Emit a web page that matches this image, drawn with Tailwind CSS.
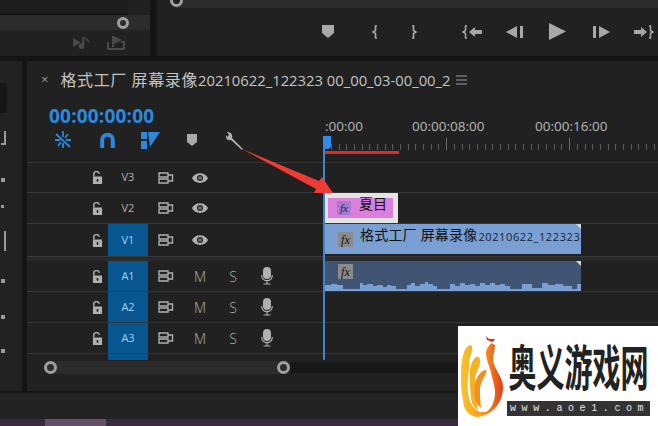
<!DOCTYPE html>
<html lang="en">
  <head>
    <meta charset="UTF-8" />
    <title>Premiere timeline</title>
    <script src="https://cdn.jsdelivr.net/npm/@tailwindcss/browser@4"></script>
  </head>
  <body class="w-[658px] h-[426px] overflow-hidden bg-[#141414] font-['Open_Sans','Noto_Sans_CJK_SC',sans-serif] text-[#b4b4b4]">
    <svg class="hidden">
      <symbol id="lock" viewBox="0 0 12 14"><path d="M2 6V4a3 3 0 0 1 6-1" fill="none" stroke="currentColor" stroke-width="1.6"/><path fill-rule="evenodd" d="M1 6h10v8H1zM6 8.500a1.200 1.200 0 0 0-.6 2.200V12h1.200v-1.300A1.200 1.200 0 0 0 6 8.500z" fill="currentColor"/></symbol>
      <symbol id="sync" viewBox="0 0 16 12"><path d="M1 1h9v4H1zM1 7h9v4H1zM10 3h4.500v6H10" fill="none" stroke="currentColor" stroke-width="1.400"/></symbol>
      <symbol id="eye" viewBox="0 0 16 10"><path fill-rule="evenodd" d="M0 5c3-6.500 13-6.500 16 0-3 6.500-13 6.500-16 0zM8 2a3 3 0 1 0 0 6 3 3 0 0 0 0-6z" fill="currentColor"/><circle cx="8" cy="5" r="1.800" fill="currentColor" opacity=".6"/></symbol>
      <symbol id="mic" viewBox="0 0 12 18"><rect x="2" y="0" width="8" height="12" rx="4" fill="currentColor"/><path d="M.7 8c0 7.500 10.600 7.500 10.600 0M6 13.500v3M2.500 17h7" fill="none" stroke="currentColor" stroke-width="1.200"/></symbol>
      <symbol id="fx" viewBox="0 0 16 16"><rect width="16" height="16" fill="#8a8a8a"/><text x="8" y="12.500" text-anchor="middle" font-size="13" font-style="italic" font-family="Liberation Serif" fill="#111">fx</text></symbol>
      <symbol id="fxp" viewBox="0 0 16 16"><rect width="16" height="16" fill="#a77bd0"/><text x="8" y="12.500" text-anchor="middle" font-size="13" font-style="italic" font-family="Liberation Serif" fill="#2a1a50">fx</text></symbol>
    </svg>

    <!-- top panels -->
    <div class="flex h-[56px] gap-[7px]">
      <div class="w-[150px] bg-[#212121] flex flex-col">
        <div class="h-[15px] bg-[#1c1c1c] border-b border-[#0c0c0c] mr-[22px]"></div>
        <div class="h-[15px] bg-[#2c2c2c] flex justify-end items-center pr-[21px] pt-[1px]">
          <span class="w-[12px] h-[12px] rounded-full border-[3px] border-[#a0a0a0]"></span>
        </div>
        <div class="flex justify-end gap-[16px] pr-[25px] pt-[6px] text-[#4a4a4a]">
          <svg class="w-[18px] h-[13px]" viewBox="0 0 18 13"><path d="M0 2l8 4.500L0 11z" fill="currentColor"/><path d="M11 1v9a2.500 2.500 0 1 1-1.500-2V1h1.500zM11 1c2 2 5 2 5 6" fill="currentColor" stroke="currentColor" stroke-width=".6"/></svg>
          <svg class="w-[18px] h-[14px]" viewBox="0 0 18 14"><path d="M1 6v7h16V6h-3" fill="none" stroke="currentColor" stroke-width="2"/><path d="M7 0l8 4-8 4v3H5V0z" fill="currentColor"/></svg>
        </div>
      </div>
      <div class="flex-1 bg-[#212121] flex flex-col">
        <div class="h-[8px] bg-[#2c2c2c] ml-[19px] relative">
          <span class="absolute left-[-6px] top-[-6px] w-[13px] h-[13px] rounded-full border-[3px] border-[#a0a0a0] bg-[#212121]"></span>
        </div>
        <div class="flex items-center text-[#a8a8a8] h-[48px] pb-[1px]">
          <svg class="ml-[165px] w-[12px] h-[13px]" viewBox="0 0 12 13"><path d="M0 0h12v8l-6 5-6-5z" fill="currentColor"/></svg>
          <svg class="ml-[38px] w-[7px] h-[14px]" viewBox="0 0 7 14"><path d="M5 1H3.500v4.500L1 7l2.500 1.500V13H5" fill="none" stroke="currentColor" stroke-width="1.600"/></svg>
          <svg class="ml-[31px] w-[7px] h-[14px]" viewBox="0 0 7 14"><path d="M2 1h1.500v4.500L6 7 3.500 8.500V13H2" fill="none" stroke="currentColor" stroke-width="1.600"/></svg>
          <svg class="ml-[45px] w-[20px] h-[14px]" viewBox="0 0 20 14"><path d="M5 1H3.500v4.500L1 7l2.500 1.500V13H5" fill="none" stroke="currentColor" stroke-width="1.500"/><path d="M7 7l6-5v3h7v4h-7v3z" fill="currentColor"/></svg>
          <svg class="ml-[24px] w-[18px] h-[12px]" viewBox="0 0 18 12"><path d="M0 6l11-6v12z" fill="currentColor"/><rect x="14" y="0" width="3" height="12" fill="currentColor"/></svg>
          <svg class="ml-[25px] w-[17px] h-[17px]" viewBox="0 0 17 17"><path d="M0 0l17 8.500L0 17z" fill="currentColor"/></svg>
          <svg class="ml-[27px] w-[17px] h-[12px]" viewBox="0 0 17 12"><rect x="0" y="0" width="3" height="12" fill="currentColor"/><path d="M6 0l11 6-11 6z" fill="currentColor"/></svg>
          <svg class="ml-[24px] w-[20px] h-[14px]" viewBox="0 0 20 14"><path d="M0 5h7V2l6 5-6 5V9H0z" fill="currentColor"/><path d="M15 1h1.500v4.500L19 7l-2.500 1.500V13H15" fill="none" stroke="currentColor" stroke-width="1.500"/></svg>
        </div>
      </div>
    </div>

    <div class="flex h-[330px] mt-[5px] gap-[5px]">
      <!-- tools strip -->
      <div class="w-[22px] bg-[#222222] flex flex-col items-start pl-[1px]">
        <div class="h-[30px] w-[7px] -ml-[1px] mt-[22px] bg-[#161616] rounded-r-sm"></div>
        <span class="mt-[18px] w-[5px] h-[14px] border-r-2 border-b-2 border-[#9a9a9a]"></span>
        <span class="mt-[33px] w-[4px] h-[4px] bg-[#9a9a9a]"></span>
        <span class="mt-[23px] w-[3px] h-[3px] bg-[#9a9a9a]"></span>
        <span class="mt-[23px] w-[5px] h-[20px] border-r-2 border-[#9a9a9a]"></span>
        <span class="mt-[28px] w-[4px] h-[4px] bg-[#9a9a9a]"></span>
        <span class="mt-[32px] w-[4px] h-[4px] bg-[#9a9a9a]"></span>
        <span class="mt-[30px] w-[4px] h-[4px] bg-[#9a9a9a]"></span>
      </div>

      <!-- timeline panel -->
      <div class="flex-1 bg-[#212121] flex flex-col relative">
        <div class="h-[36px] flex items-center pl-[14px] pt-[2px] text-[#c4c4c4] whitespace-nowrap">
          <span class="text-[13px] text-[#999] mr-[12px]">×</span>
          <span class="text-[16px] tracking-[0.6px]">格式工厂 屏幕录像</span>
          <span class="text-[14.800px]">20210622_122323 00_00_03-00_00_2</span>
          <svg class="ml-[5px] w-[11px] h-[10px]" viewBox="0 0 11 10"><path d="M0 1h11M0 5h11M0 9h11" stroke="#a0a0a0" stroke-width="1"/></svg>
        </div>

        <div class="flex h-[65px]">
          <div class="w-[296px] pl-[22px]">
            <div class="text-[19px] leading-[22px] font-bold tracking-[0.2px] text-[#2d88e0] mt-[8px]">00:00:00:00</div>
            <div class="flex items-center h-[24px] mt-[1px] text-[#2d88e0]">
              <svg class="ml-[5px] w-[18px] h-[18px]" viewBox="0 0 18 18"><path d="M9 0v6M2 3l14 13M1 9h5M12 9h5M4 15l3-4M14 3l-3 4M9 12v5" stroke="currentColor" stroke-width="1.800" fill="none"/></svg>
              <svg class="ml-[28px] w-[15px] h-[16px]" viewBox="0 0 15 16"><path d="M2.200 16V8a5.300 5.300 0 0 1 10.600 0v8" fill="none" stroke="currentColor" stroke-width="4"/></svg>
              <svg class="ml-[26px] w-[19px] h-[17px]" viewBox="0 0 19 17"><path d="M0 0h6v7H0zM0 9h6v8H0zM7 0h12L9 15z" fill="currentColor"/></svg>
              <svg class="ml-[27px] w-[10px] h-[12px] text-[#a8a8a8]" viewBox="0 0 10 12"><path d="M0 0h10v8l-5 4-5-4z" fill="currentColor"/></svg>
              <svg class="ml-[29px] w-[18px] h-[19px] text-[#b0b0b0]" viewBox="0 0 18 19"><path d="M17 18L6 7c1-3-1-6-5-6l2 3-1.500 2L0 4c-1 4 2 6 5 5l11 10z" fill="currentColor"/></svg>
            </div>
          </div>
          <!-- ruler -->
          <div class="flex-1 flex flex-col relative">
            <div class="flex h-[40px] pt-[21px] text-[13.500px] leading-[16px] text-[#b8b8b8] whitespace-nowrap">
              <span class="w-[89px] pl-[2px]">:00:00</span>
              <span class="w-[123px]">00:00:08:00</span>
              <span>00:00:16:00</span>
            </div>
            <svg class="w-[335px] h-[6px] mt-[7px] overflow-visible shrink-0" viewBox="0 0 335 6">
              <path stroke="#5c5c5c" stroke-width="1" fill="none" d="M.5 0v6M8.500 0v6M16.500 0v6M23.500 0v6M31.500 0v6M39.500 0v6M46.500 0v6M54.500 0v6M62.500 0v6M69.500 0v6M77.500 0v6M85.500 0v6M92.500 0v6M100.500 0v6M108.500 0v6M115.500 0v6M131.500 0v6M139.500 0v6M146.500 0v6M154.500 0v6M162.500 0v6M169.500 0v6M177.500 0v6M185.500 0v6M192.500 0v6M200.500 0v6M208.500 0v6M215.500 0v6M223.500 0v6M231.500 0v6M238.500 0v6M254.500 0v6M262.500 0v6M269.500 0v6M277.500 0v6M285.500 0v6M292.500 0v6M300.500 0v6M308.500 0v6M315.500 0v6M323.500 0v6M331.500 0v6"/>
              <path stroke="#727272" stroke-width="1" fill="none" d="M123.500 -6v12M246.500 -6v12"/>
            </svg>
            <div class="w-[75px] h-[3px] bg-[#e12a22] mt-[1px] ml-[1px]"></div>
            <span class="absolute left-0 top-[39px] w-[8px] h-[13px] bg-[#2f8cec] rounded-b-sm"></span>
          </div>
        </div>

        <!-- tracks -->
        <div class="border-t border-[#363636]">
          <div class="flex h-[30px] border-b border-[#363636]">
            <div class="w-[296px] flex items-center pl-[60px] text-[#b0b0b0]">
              <div class="w-[21px] flex justify-center"><svg class="w-[11px] h-[13px]"><use href="#lock"/></svg></div>
              <div class="w-[40px] text-center text-[11px]">V3</div>
              <div class="w-[36px] flex justify-center"><svg class="w-[16px] h-[12px]"><use href="#sync"/></svg></div>
              <div class="w-[32px] flex justify-center"><svg class="w-[16px] h-[10px]"><use href="#eye"/></svg></div>
            </div>
            <div class="flex-1"></div>
          </div>
          <div class="flex h-[31px] border-b border-[#363636]">
            <div class="w-[296px] flex items-center pl-[60px] text-[#b0b0b0]">
              <div class="w-[21px] flex justify-center"><svg class="w-[11px] h-[13px]"><use href="#lock"/></svg></div>
              <div class="w-[40px] text-center text-[11px]">V2</div>
              <div class="w-[36px] flex justify-center"><svg class="w-[16px] h-[12px]"><use href="#sync"/></svg></div>
              <div class="w-[32px] flex justify-center"><svg class="w-[16px] h-[10px]"><use href="#eye"/></svg></div>
            </div>
            <div class="flex-1 pl-[2px]">
              <div class="w-[73px] h-[30px] bg-[#e4e4e4] pt-[5px] pl-[3px]">
                <div class="w-[65px] h-[20px] bg-[#dc7fdc] flex items-center pl-[9px]">
                  <svg class="w-[14px] h-[14px]"><use href="#fxp"/></svg>
                  <span class="ml-[8px] -mt-[9px] text-[14px] leading-[18px] text-[#111]">夏目</span>
                </div>
              </div>
            </div>
          </div>
          <div class="flex h-[32px]">
            <div class="w-[296px] flex items-stretch pl-[60px] text-[#b0b0b0]">
              <div class="w-[21px] flex justify-center items-center"><svg class="w-[11px] h-[13px]"><use href="#lock"/></svg></div>
              <div class="w-[40px] bg-[#07568f] text-[#a9d0f0] flex items-center justify-center text-[11px]">V1</div>
              <div class="w-[36px] flex justify-center items-center"><svg class="w-[16px] h-[12px]"><use href="#sync"/></svg></div>
              <div class="w-[32px] flex justify-center items-center"><svg class="w-[16px] h-[10px]"><use href="#eye"/></svg></div>
            </div>
            <div class="flex-1 pl-[2px]">
              <div class="relative w-[256px] h-[30px] bg-[#7a9fd3] flex items-center pl-[13px] whitespace-nowrap text-[#14233a] overflow-hidden">
                <svg class="w-[15px] h-[15px] shrink-0"><use href="#fx"/></svg>
                <span class="ml-[7px] -mt-[8px] text-[14px] leading-[20px] tracking-[0.2px] text-[#111]">格式工厂 屏幕录像</span>
                <span class="-mt-[4px] ml-[1px] text-[11px] tracking-[0.6px]">20210622_122323</span>
                <span class="absolute right-0 top-0 w-0 h-0 border-l-[5px] border-l-transparent border-t-[5px] border-t-[#d8d8d8]"></span>
              </div>
            </div>
          </div>
          <div class="h-[5px] bg-[#2a2a2a] border-t border-[#3a3a3a]"></div>
          <div class="flex h-[31px] border-b border-[#363636]">
            <div class="w-[296px] flex items-stretch pl-[60px] text-[#b0b0b0]">
              <div class="w-[21px] flex justify-center items-center"><svg class="w-[11px] h-[13px]"><use href="#lock"/></svg></div>
              <div class="w-[40px] bg-[#07568f] text-[#a9d0f0] flex items-center justify-center text-[11px]">A1</div>
              <div class="w-[36px] flex justify-center items-center"><svg class="w-[16px] h-[12px]"><use href="#sync"/></svg></div>
              <div class="w-[32px] flex justify-center items-center text-[14px] font-light">M</div>
              <div class="w-[34px] flex justify-center items-center text-[14px] font-light">S</div>
              <div class="w-[34px] flex justify-center items-center"><svg class="w-[12px] h-[18px]"><use href="#mic"/></svg></div>
            </div>
            <div class="flex-1 pl-[2px]">
              <div class="relative w-[256px] h-[30px] bg-[#3f5573] flex flex-col pl-[13px] pt-[3px]">
                <svg class="w-[15px] h-[15px]"><use href="#fx"/></svg>
                <svg class="absolute left-0 bottom-0 w-[256px] h-[10px]" viewBox="0 0 256 10"><path d="M0 10V4H6V3H12V4H18V8H35V2H38V4H42V3H48V5H52V4H58V6H62V4H66V5H71V8H82V4H86V2H90V5H95V3H100V1H103V3H108V5H112V8H125V3H130V5H135V2H140V4H145V3H150V5H155V2H160V4H165V2H170V4H175V3H180V5H185V8H197V3H207V7H217V2H223V4H230V3H238V5H247V8H252V3H256V10Z" fill="#7a9fd3"/></svg>
                <span class="absolute right-0 top-0 w-0 h-0 border-l-[5px] border-l-transparent border-t-[5px] border-t-[#d8d8d8]"></span>
              </div>
            </div>
          </div>
          <div class="flex h-[31px] border-b border-[#363636]">
            <div class="w-[296px] flex items-stretch pl-[60px] text-[#b0b0b0]">
              <div class="w-[21px] flex justify-center items-center"><svg class="w-[11px] h-[13px]"><use href="#lock"/></svg></div>
              <div class="w-[40px] bg-[#07568f] text-[#a9d0f0] flex items-center justify-center text-[11px]">A2</div>
              <div class="w-[36px] flex justify-center items-center"><svg class="w-[16px] h-[12px]"><use href="#sync"/></svg></div>
              <div class="w-[32px] flex justify-center items-center text-[14px] font-light">M</div>
              <div class="w-[34px] flex justify-center items-center text-[14px] font-light">S</div>
              <div class="w-[34px] flex justify-center items-center"><svg class="w-[12px] h-[18px]"><use href="#mic"/></svg></div>
            </div>
            <div class="flex-1"></div>
          </div>
          <div class="flex h-[31px] border-b border-[#363636]">
            <div class="w-[296px] flex items-stretch pl-[60px] text-[#b0b0b0]">
              <div class="w-[21px] flex justify-center items-center"><svg class="w-[11px] h-[13px]"><use href="#lock"/></svg></div>
              <div class="w-[40px] bg-[#07568f] text-[#a9d0f0] flex items-center justify-center text-[11px]">A3</div>
              <div class="w-[36px] flex justify-center items-center"><svg class="w-[16px] h-[12px]"><use href="#sync"/></svg></div>
              <div class="w-[32px] flex justify-center items-center text-[14px] font-light">M</div>
              <div class="w-[34px] flex justify-center items-center text-[14px] font-light">S</div>
              <div class="w-[34px] flex justify-center items-center"><svg class="w-[12px] h-[18px]"><use href="#mic"/></svg></div>
            </div>
            <div class="flex-1"></div>
          </div>
          <div class="h-[6px] pl-[81px]"><div class="w-[40px] h-[6px] bg-[#07568f]"></div></div>
        </div>

        <!-- scrollbar -->
        <div class="h-[14px] ml-[17px] flex items-center">
          <div class="w-[246px] h-[13px] bg-[#2c2c2c] rounded-full flex justify-between items-center">
            <span class="w-[13px] h-[13px] rounded-full border-[3px] border-[#a0a0a0]"></span>
            <span class="w-[13px] h-[13px] rounded-full border-[3px] border-[#a0a0a0]"></span>
          </div>
          <div class="flex-1 h-[11px] bg-[#181818]"></div>
        </div>

        <!-- playhead -->
        <div class="absolute left-[296px] top-[82px] w-[2px] h-[217px] bg-[#3a86d0]"></div>
        <!-- red arrow annotation -->
        <svg class="absolute left-[205px] top-[80px] w-[110px] h-[60px]" viewBox="0 0 110 60"><path d="M10 8L87 40l3-4 11 16H82l2-4z" fill="#ee3b36"/></svg>
      </div>
    </div>

    <!-- bottom bar -->
    <div class="mt-[2px] h-[26px] bg-[#232323]"></div>
    <div class="h-[7px] bg-[#3a2a40] pl-[45px]"><div class="w-[61px] h-[7px] bg-[#65506a]"></div></div>

    <!-- watermark -->
    <div class="absolute left-[458px] top-[326px] w-[200px] h-[100px] bg-white flex">
      <svg class="ml-[3px] mt-[7px] w-[44px] h-[84px] shrink-0" viewBox="0 0 44 84">
        <defs><linearGradient id="fire" x1="0" y1="0" x2="1" y2="0"><stop offset="0" stop-color="#f8c62c"/><stop offset=".55" stop-color="#f49a22"/><stop offset="1" stop-color="#e63a18"/></linearGradient></defs>
        <path d="M25 3l3 3 6 0-2 3-6-2z" fill="#d92c1c"/>
        <path d="M30 10l4 2c0 5-2 10-2 15 1 9 10 17 10 27 0 15-10 28-25 30C8 84 2 76 2 67 0 55-1 44 0 34 1 24 3 17 6 14c2-2 4-2 5-1 1 3-1 7-2 11-1 4-1 7-1 11-1 9-2 17-1 25 1 9 5 16 12 19h6c5-3 9-10 9-20 0-7-3-13-4-20-2-7-5-13-5-19 0-4 3-8 6-10z" fill="url(#fire)"/>
        <path d="M15 24c3-1 5 2 4 6-1 6-5 11-5 17 0 8 1 18 3 30-4-3-7-7-7-13-1-9-2-18-1-27 1-6 3-11 6-13z" fill="#f6b226"/>
        <path d="M24 37c2 0 2 2 1 3-2 5-5 9-6 14 0 4 0 7 0 10l1 11c-3-3-6-6-6-11-1-7-1-12 1-17 2-5 5-9 9-10z" fill="#f4901f"/>
      </svg>
      <div class="ml-[2px] mt-[14px]">
        <div class="w-[143px] h-[50px] flex items-center justify-center">
          <span class="block text-[28px] leading-[28px] font-bold text-[#222] whitespace-nowrap scale-y-[1.750] font-['Noto_Sans_CJK_SC',sans-serif]">奥义游戏网</span>
        </div>
        <div class="mt-[11px] w-[143px] h-[15px] bg-[#333] text-[#e8e8e8] text-[10px] leading-[15px] pl-[3px] tracking-[5.600px] font-['Liberation_Mono',monospace] whitespace-nowrap">www.aoe1.com</div>
      </div>
    </div>
  </body>
</html>
